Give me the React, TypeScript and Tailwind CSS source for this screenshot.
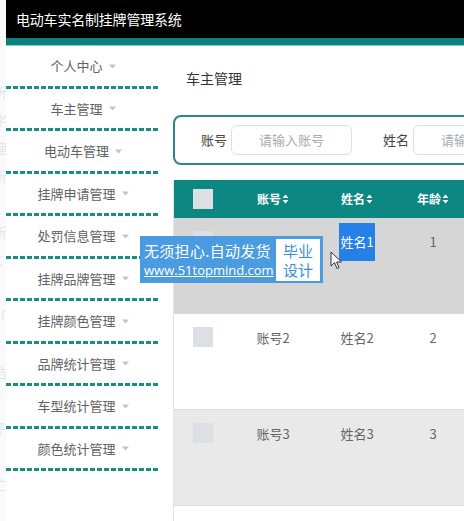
import React from "react";

const menus = [
  "个人中心",
  "车主管理",
  "电动车管理",
  "挂牌申请管理",
  "处罚信息管理",
  "挂牌品牌管理",
  "挂牌颜色管理",
  "品牌统计管理",
  "车型统计管理",
  "颜色统计管理",
];

const ghost = ["", "析", "字", "理", "析", "5", "析", "C", "5", "「", "!", "浩", "", "子", "", "亡"];

function Caret() {
  return (
    <svg width="7" height="5" viewBox="0 0 7 5" className="ml-[6px] mt-[1px]">
      <path d="M0 0.5 L7 0.5 L3.5 4.5 Z" fill="#c0c4cc" />
    </svg>
  );
}

function Sort() {
  return (
    <svg width="7" height="10" viewBox="0 0 7 10" className="ml-[1px]">
      <path d="M0.5 4 L3.5 0.5 L6.5 4 Z" fill="#ffffff" />
      <path d="M0.5 6 L3.5 9.5 L6.5 6 Z" fill="#ffffff" />
    </svg>
  );
}

function Box() {
  return <div className="w-[20px] h-[20px] bg-[#dcdfe4]" />;
}

const cols = "grid grid-cols-[58px_82px_86px_90px]";

function Row({ n, bg, sel }: { n: number; bg: string; sel?: boolean }) {
  return (
    <div className={`${cols} h-[96px] ${bg} border-b border-[#dcdcdc] text-[13px] text-[#666]`}>
      <div className="flex justify-center pt-[13px]">
        <Box />
      </div>
      <div className="text-center pt-[5px] leading-[38px]">账号{n}</div>
      <div className="text-center pt-[5px] leading-[38px]">
        {sel ? (
          <span className="inline-block bg-[#2580e8] text-white px-[1px] leading-[38px]">姓名{n}</span>
        ) : (
          <span>姓名{n}</span>
        )}
      </div>
      <div className="text-center pt-[5px] leading-[38px] pr-[24px]">{n}</div>
    </div>
  );
}

export default function App() {
  return (
    <div
      className="relative w-[464px] h-[521px] overflow-hidden bg-white flex"
      style={{ fontFamily: '"Noto Sans CJK SC", "Noto Sans", sans-serif' }}
    >
      {/* ghost strip */}
      <div className="w-[6px] shrink-0 overflow-hidden bg-[#fafafa] pt-[50px]">
        <div className="-ml-[7px] flex flex-col text-[14px] leading-[28px] text-[#e6e6e6]">
          {ghost.map((g, i) => (
            <span key={i} className="h-[28px]">{g}</span>
          ))}
        </div>
      </div>

      <div className="flex-1 flex flex-col min-w-0">
        {/* header */}
        <div className="h-[38px] bg-black flex items-center pl-[10px] shrink-0">
          <span className="text-white text-[14px] tracking-[-0.2px]">电动车实名制挂牌管理系统</span>
        </div>
        <div className="h-[8px] bg-[#0b807c] border-b border-[#7fd3cd] shrink-0" />

        <div className="flex flex-1 min-h-0">
          {/* sidebar */}
          <div className="w-[154px] shrink-0 flex flex-col bg-white">
            {menus.map((m) => (
              <div key={m} className="flex flex-col">
                <div className="h-[39.5px] flex items-center justify-center text-[13px] text-[#606266]">
                  <span>{m}</span>
                  <Caret />
                </div>
                <div className="h-[3px] bg-[repeating-linear-gradient(90deg,#17907f_0px,#17907f_5px,transparent_5px,transparent_7px)]" />
              </div>
            ))}
          </div>

          {/* main */}
          <div className="flex-1 min-w-0 overflow-hidden pl-[13px] bg-white">
            <div className="pt-[22px] pl-[13px] text-[14px] leading-[20px] text-[#333]">车主管理</div>
            <div className="mt-[27px] w-[520px] h-[50px] border-2 border-[#2a8782] rounded-[8px] flex items-center pl-[26px]">
              <span className="text-[13px] text-[#444]">账号</span>
              <div className="ml-[4px] w-[121px] h-[30px] rounded-[6px] border border-[#dcdfe6] flex items-center justify-center text-[13px] text-[#a8abb2]">
                请输入账号
              </div>
              <span className="ml-[31px] text-[13px] text-[#444]">姓名</span>
              <div className="ml-[4px] w-[121px] h-[30px] rounded-[6px] border border-[#dcdfe6] flex items-center justify-center text-[13px] text-[#a8abb2]">
                请输入姓名
              </div>
            </div>

            <div className="mt-[15px] w-[520px] border-l border-[#e3e3e3]">
              <div className={`${cols} h-[38px] bg-[#0d8782] text-white text-[12px] font-bold`}>
                <div className="flex items-center justify-center">
                  <Box />
                </div>
                <div className="flex items-center justify-center">
                  账号<Sort />
                </div>
                <div className="flex items-center justify-center">
                  姓名<Sort />
                </div>
                <div className="flex items-center justify-center pr-[24px]">
                  年龄<Sort />
                </div>
              </div>
              <Row n={1} bg="bg-[#d6d6d6]" sel />
              <Row n={2} bg="bg-white" />
              <Row n={3} bg="bg-[#e9e9e9]" />
              <div className="h-[40px] bg-white" />
            </div>
          </div>
        </div>
      </div>

      {/* watermark */}
      <div className="absolute left-[140px] top-[236px] w-[183px] h-[47px] bg-[#4a9be0] flex items-center">
        <div className="flex flex-col pl-[4px] text-white">
          <span className="text-[15px] leading-[21px] tracking-[0.3px]">无须担心.自动发货</span>
          <span className="text-[13px] leading-[19px] underline" style={{ fontFamily: '"Open Sans", sans-serif' }}>
            www.51topmind.com
          </span>
        </div>
        <div className="ml-auto mr-[3px] w-[44px] h-[42px] bg-white flex flex-col items-center justify-center text-[#3a8fdc] text-[15px] leading-[19px]">
          <span>毕业</span>
          <span>设计</span>
        </div>
      </div>

      {/* cursor */}
      <svg className="absolute left-[330px] top-[251px]" width="13" height="19" viewBox="0 0 13 19">
        <path d="M1 1 L1 15 L4.5 11.5 L7 17.5 L9 16.6 L6.6 11 L11.5 11 Z" fill="#fff" stroke="#333" strokeWidth="1" strokeLinejoin="round" />
      </svg>
    </div>
  );
}
